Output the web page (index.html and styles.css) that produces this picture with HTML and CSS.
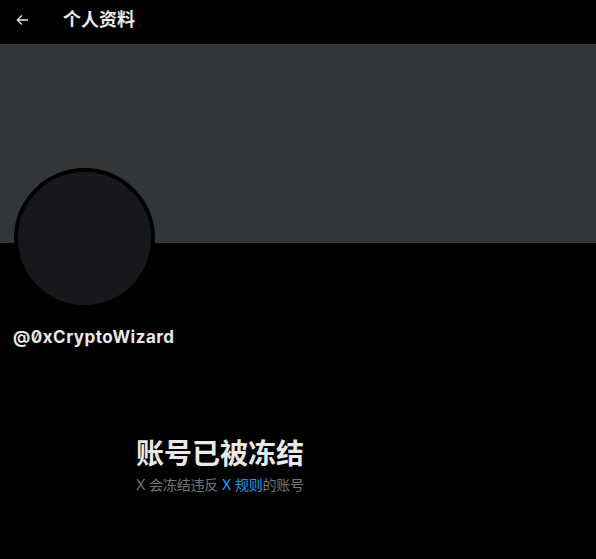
FILE: index.html
```html
<!DOCTYPE html>
<html lang="zh">
<head>
<meta charset="utf-8">
<link rel="stylesheet" href="styles.css">
</head>
<body>
<div class="page">
  <header class="topbar">
    <div class="back">
      <svg viewBox="0 0 24 24" width="16" height="16"><path fill="#e7e9ea" d="M7.414 13l5.043 5.04-1.414 1.42L3.586 12l7.457-7.46 1.414 1.42L7.414 11H21v2H7.414z"/></svg>
    </div>
    <h1 class="title">个人资料</h1>
  </header>
  <div class="banner"></div>
  <div class="profile">
    <div class="avatar"></div>
    <div class="handle">@0xCryptoWizard</div>
  </div>
  <div class="notice">
    <div class="notice-title">账号已被冻结</div>
    <div class="notice-text">X 会冻结违反 <a href="#" class="link">X 规则</a>的账号</div>
  </div>
</div>
</body>
</html>
```
FILE: styles.css
```css
html, body {
  margin: 0;
  padding: 0;
  background: #000;
  font-family: Inter, "Noto Sans CJK SC", sans-serif;
  color: #e7e9ea;
}
.page {
  width: 596px;
  height: 559px;
  overflow: hidden;
}
.topbar {
  height: 44px;
  display: flex;
  align-items: center;
}
.back {
  width: 16px;
  height: 16px;
  margin-left: 14px;
  margin-top: -5px;
  display: flex;
}
.title {
  margin: -5px 0 0 33px;
  font-size: 18px;
  font-weight: 700;
  line-height: 22px;
}
.banner {
  height: 199px;
  background: #333639;
}
.profile {
  padding-left: 13px;
}
.avatar {
  width: 133px;
  height: 133px;
  border-radius: 50%;
  background: #16181c;
  border: 4px solid #000;
  margin-top: -75px;
  margin-left: 1px;
}
.handle {
  margin-top: 18px;
  font-size: 17px;
  font-weight: 700;
  line-height: 20px;
  letter-spacing: 0.5px;
  font-feature-settings: "zero" 1;
  color: #e7e9ea;
}
.notice {
  margin: 91px 0 0 136px;
}
.notice-title {
  font-size: 28px;
  font-weight: 700;
  line-height: 32px;
  color: #e7e9ea;
}
.notice-text {
  margin-top: 5px;
  font-size: 14px;
  letter-spacing: -0.2px;
  line-height: 20px;
  color: #71767b;
}
.link {
  color: #1d9bf0;
  text-decoration: none;
}
```
